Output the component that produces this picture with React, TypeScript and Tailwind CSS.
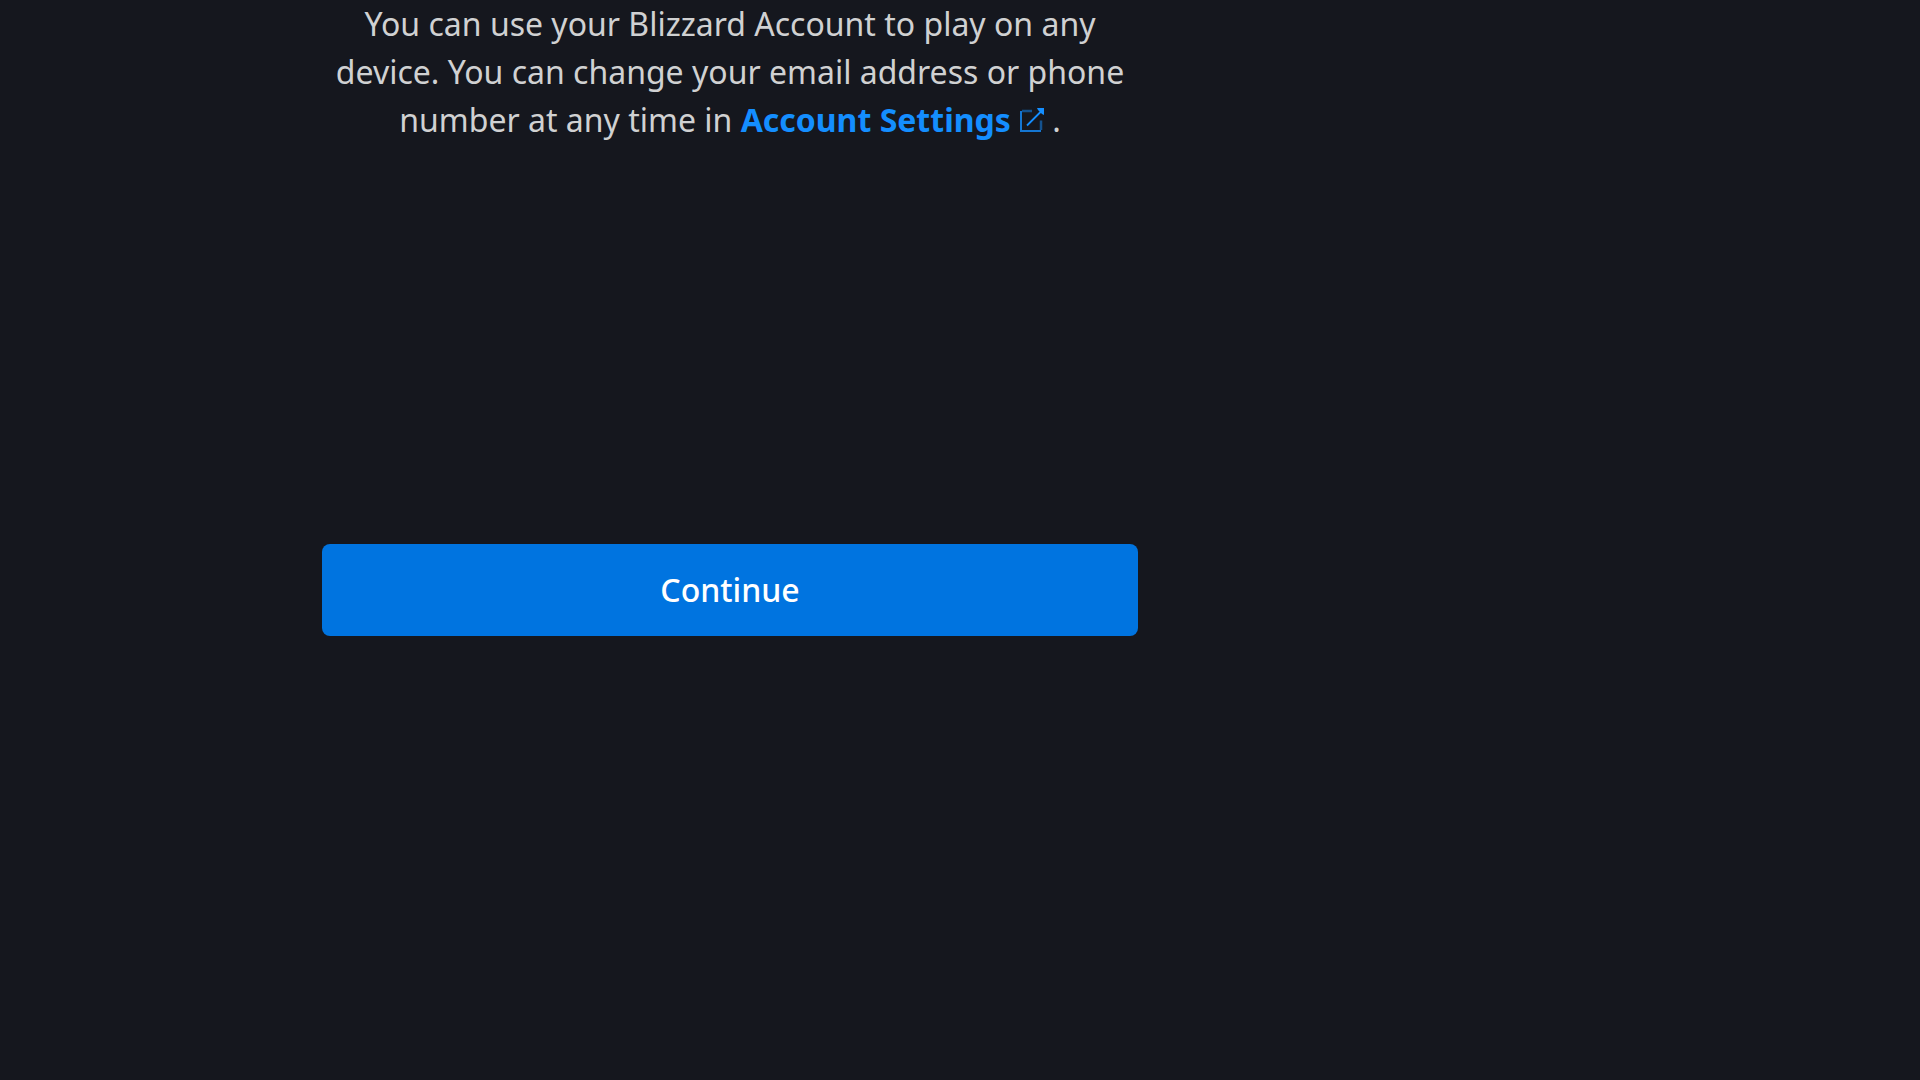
import React from 'react';

function ExternalLinkIcon() {
  return (
    <svg
      viewBox="0 0 24 24"
      fill="none"
      stroke="currentColor"
      className="ml-[9px] inline-block h-6 w-6 align-baseline"
      aria-hidden="true"
    >
      {/* open frame, dimmer where it breaks for the arrow */}
      <path d="M1 3v20h20" strokeWidth="2" opacity="0.8" />
      <path d="M2 3h10M21 22V12.500" strokeWidth="2.500" opacity="0.5" />
      <path d="M7 17.500 21 3.500" strokeWidth="1.800" />
      <path d="M17 0h7v7l-2-1-4-4z" fill="currentColor" stroke="none" />
    </svg>
  );
}

export default function App() {
  return (
    <div className="min-h-screen w-full bg-[#15171e] font-['Noto_Sans',sans-serif] text-[32px] leading-[48px]">
      <main className="ml-[322px] flex w-[816px] max-w-full flex-col">
        <p className="text-center text-[#d0d1d2]">
          You can use your Blizzard Account to play on any device. You can change your email address or phone number at any time in{' '}
          <a href="#account-settings" className="whitespace-nowrap font-bold text-[#148eff]">
            Account Settings
            <ExternalLinkIcon />
          </a>{' '}
          .
        </p>
        <button
          type="button"
          className="mt-[400px] h-[92px] w-full rounded-lg bg-[#0074e0] font-medium text-white"
        >
          Continue
        </button>
      </main>
    </div>
  );
}
